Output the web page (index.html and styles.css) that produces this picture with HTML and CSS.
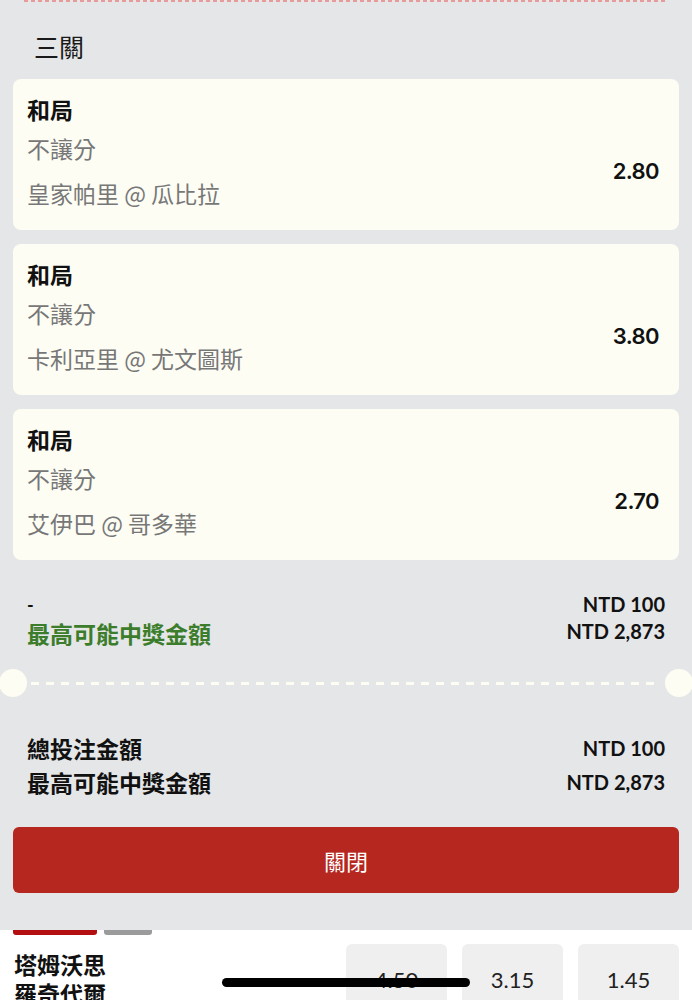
FILE: index.html
```html
<!DOCTYPE html>
<html>
<head>
    <meta charset="utf-8">
    <title>三關 - 注單</title>
    <link rel="stylesheet" href="styles.css">
</head>
<body>
    <div class="sheet">
        <div class="top-dash"></div>
        <div class="title">三關</div>

        <div class="leg">
            <div class="leg-pick">和局</div>
            <div class="leg-body">
                <div class="leg-info">
                    <div class="leg-market">不讓分</div>
                    <div class="leg-match">皇家帕里 @ 瓜比拉</div>
                </div>
                <div class="leg-odds">2.80</div>
            </div>
        </div>

        <div class="leg">
            <div class="leg-pick">和局</div>
            <div class="leg-body">
                <div class="leg-info">
                    <div class="leg-market">不讓分</div>
                    <div class="leg-match">卡利亞里 @ 尤文圖斯</div>
                </div>
                <div class="leg-odds">3.80</div>
            </div>
        </div>

        <div class="leg">
            <div class="leg-pick">和局</div>
            <div class="leg-body">
                <div class="leg-info">
                    <div class="leg-market">不讓分</div>
                    <div class="leg-match">艾伊巴 @ 哥多華</div>
                </div>
                <div class="leg-odds">2.70</div>
            </div>
        </div>

        <div class="summary">
            <div class="summary-left">
                <div class="dash-label">-</div>
                <div class="win-label">最高可能中獎金額</div>
            </div>
            <div class="summary-right">
                <div class="amount">NTD 100</div>
                <div class="amount">NTD 2,873</div>
            </div>
        </div>

        <div class="ticket-cut">
            <span class="notch"></span>
            <span class="cut-line"></span>
            <span class="notch"></span>
        </div>

        <div class="totals">
            <div class="total-label">總投注金額</div>
            <div class="amount">NTD 100</div>
            <div class="total-label">最高可能中獎金額</div>
            <div class="amount">NTD 2,873</div>
        </div>

        <button class="close-btn">關閉</button>
    </div>

    <div class="below">
        <div class="tabs">
            <span class="tab tab-active"></span>
            <span class="tab"></span>
        </div>
        <div class="match-row">
            <div class="teams">
                <div>塔姆沃思</div>
                <div>羅奇代爾</div>
            </div>
            <div class="odds-btn">4.50</div>
            <div class="odds-btn">3.15</div>
            <div class="odds-btn">1.45</div>
        </div>
    </div>

    <div class="home-bar"></div>
</body>
</html>
```

FILE: styles.css
```css
html, body {
    margin: 0;
    height: 1000px;
    overflow: hidden;
}
body {
    font-family: "Noto Sans CJK TC", "Noto Sans", sans-serif;
    background: #ffffff;
    color: #111;
    position: relative;
}
.sheet {
    background: #e5e6e8;
    padding: 0 13px 38px;
    height: 930px;
    box-sizing: border-box;
}
.top-dash {
    margin: 0 11px;
    height: 2px;
    background: repeating-linear-gradient(90deg, #e69a9a 0 4px, transparent 4px 7px);
}
.title {
    font-size: 25px;
    line-height: 30px;
    padding-left: 21px;
    margin-top: 29px;
    margin-bottom: 18px;
    color: #1a1a1a;
}
.leg {
    background: #fdfdf4;
    border-radius: 8px;
    height: 151px;
    box-sizing: border-box;
    padding: 15px 20px 0 14px;
    margin-bottom: 14px;
}
.leg-pick {
    font-size: 23px;
    font-weight: 700;
    line-height: 30px;
}
.leg-body {
    display: flex;
    align-items: center;
}
.leg-info {
    flex: 1;
    color: #777;
    font-size: 23px;
}
.leg-market {
    line-height: 30px;
    margin-top: 9px;
}
.leg-match {
    line-height: 30px;
    margin-top: 15px;
}
.leg-odds {
    font-family: Inter, "Noto Sans", sans-serif;
    font-size: 22px;
    font-weight: 600;
    letter-spacing: -0.6px;
    color: #111;
    margin-top: 10px;
}
.summary {
    display: flex;
    justify-content: space-between;
    padding: 18px 14px 0;
}
.dash-label {
    font-family: Lato, sans-serif;
    font-weight: 700;
    font-size: 18px;
    line-height: 26px;
}
.win-label {
    color: #3c7d2c;
    font-weight: 700;
    font-size: 23px;
    line-height: 30px;
}
.summary-right {
    text-align: right;
    margin-top: -1px;
}
.amount {
    font-family: Lato, sans-serif;
    font-weight: 700;
    font-size: 20px;
    line-height: 27px;
    text-align: right;
    color: #111;
}
.ticket-cut {
    display: flex;
    align-items: center;
    margin: 21px -14px 0;
    height: 28px;
}
.notch {
    width: 28px;
    height: 28px;
    border-radius: 50%;
    background: #fdfdf4;
}
.cut-line {
    flex: 1;
    height: 3px;
    margin: 0 4px;
    background: repeating-linear-gradient(90deg, #fdfdf4 0 8px, transparent 8px 15px);
}
.totals {
    display: grid;
    grid-template-columns: 1fr auto;
    grid-auto-rows: 34px;
    align-items: center;
    padding: 34px 14px 0;
}
.total-label {
    font-weight: 700;
    font-size: 23px;
}
.close-btn {
    display: block;
    width: 100%;
    height: 66px;
    margin-top: 28px;
    border: none;
    border-radius: 6px;
    background: #b6271f;
    color: #fff;
    font-family: "Noto Sans CJK TC", sans-serif;
    font-size: 22px;
}
.below {
    padding: 0 14px;
}
.tabs {
    display: flex;
    gap: 7px;
    margin-left: -1px;
}
.tab {
    width: 48px;
    height: 5px;
    border-radius: 0 0 3px 3px;
    background: #9b9b9b;
}
.tab-active {
    width: 84px;
    background: #b30f12;
}
.match-row {
    display: flex;
    gap: 15px;
    margin-top: 9px;
}
.teams {
    flex: 1;
    font-weight: 700;
    font-size: 23px;
    line-height: 29px;
    padding-top: 6px;
}
.odds-btn {
    width: 101px;
    height: 70px;
    border-radius: 6px;
    background: #efeff0;
    font-family: Lato, sans-serif;
    font-size: 22px;
    color: #222;
    display: flex;
    align-items: center;
    justify-content: center;
}
.odds-btn:last-child {
    margin-right: -1px;
}
.home-bar {
    position: absolute;
    left: 222px;
    top: 978px;
    width: 248px;
    height: 9px;
    border-radius: 5px;
    background: #000;
}
```
